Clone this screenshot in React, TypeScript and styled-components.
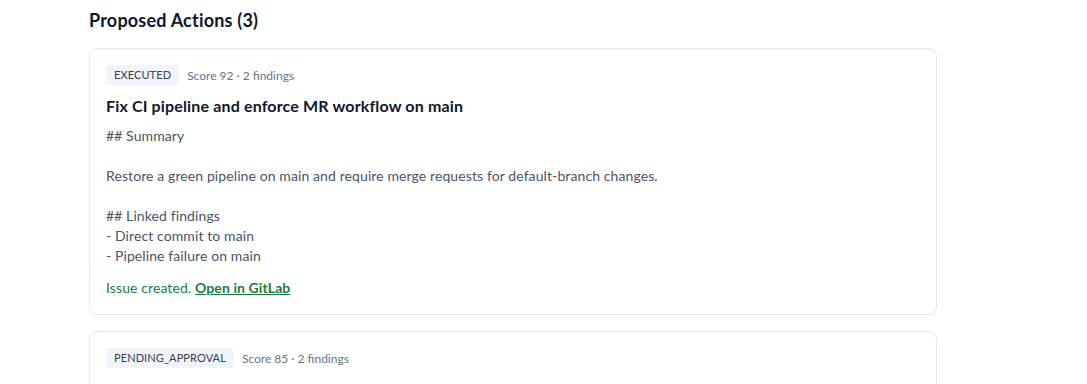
import React from "react";
import styled, { createGlobalStyle } from "styled-components";

const Global = createGlobalStyle`
  html, body { margin: 0; padding: 0; background: #ffffff; }
  body { font-family: Lato, "Noto Sans", sans-serif; color: #0f172a; }
`;

const Page = styled.main`
  width: 848px;
  padding: 8px 0 0 89px;
`;

const Heading = styled.h2`
  margin: 0 0 16px;
  font-size: 18px;
  line-height: 24px;
  font-weight: 700;
  letter-spacing: 0.2px;
  color: #0f172a;
`;

const List = styled.div`
  display: flex;
  flex-direction: column;
  gap: 16px;
`;

const Card = styled.section`
  border: 1px solid #e2e8f0;
  border-radius: 8px;
  padding: 16px;
  background: #fff;
`;

const Meta = styled.div`
  display: flex;
  align-items: center;
  gap: 8px;
  height: 20px;
`;

const Badge = styled.span`
  background: #f1f5f9;
  color: #334155;
  font-size: 11px;
  line-height: 20px;
  padding: 0 8px;
  border-radius: 4px;
  letter-spacing: 0.1px;
`;

const MetaText = styled.span`
  color: #64748b;
  font-size: 12px;
`;

const Title = styled.h3`
  margin: 9px 0 8px;
  font-size: 16px;
  line-height: 24px;
  font-weight: 700;
  letter-spacing: 0.15px;
  color: #0f172a;
`;

const Body = styled.div`
  white-space: pre-wrap;
  font-size: 14px;
  line-height: 20px;
  letter-spacing: 0.1px;
  color: #475569;
`;

const Status = styled.div`
  margin-top: 12px;
  font-size: 14px;
  line-height: 20px;
  letter-spacing: 0.1px;
  color: #15803d;
`;

const Link = styled.a`
  color: #15803d;
  font-weight: 700;
  text-decoration: underline;
`;

type Action = {
  status: string;
  score: number;
  findings: number;
  title: string;
  body: string;
  issue?: boolean;
};

const actions: Action[] = [
  {
    status: "EXECUTED",
    score: 92,
    findings: 2,
    title: "Fix CI pipeline and enforce MR workflow on main",
    body:
      "## Summary\n\nRestore a green pipeline on main and require merge requests for default-branch changes.\n\n## Linked findings\n- Direct commit to main\n- Pipeline failure on main",
    issue: true,
  },
  {
    status: "PENDING_APPROVAL",
    score: 85,
    findings: 2,
    title: "Add branch safeguards and owner approvals",
    body:
      "## Summary\n\nProtect release branches and require code owner approval.\n\n## Linked findings\n- Missing approvals\n- Unprotected release branch",
  },
];

export default function App() {
  return (
    <>
      <Global />
      <Page>
        <Heading>Proposed Actions (3)</Heading>
        <List>
          {actions.map((a) => (
            <Card key={a.title}>
              <Meta>
                <Badge>{a.status}</Badge>
                <MetaText>
                  Score {a.score} · {a.findings} findings
                </MetaText>
              </Meta>
              <Title>{a.title}</Title>
              <Body>{a.body}</Body>
              {a.issue && (
                <Status>
                  Issue created. <Link href="#">Open in GitLab</Link>
                </Status>
              )}
            </Card>
          ))}
        </List>
      </Page>
    </>
  );
}
